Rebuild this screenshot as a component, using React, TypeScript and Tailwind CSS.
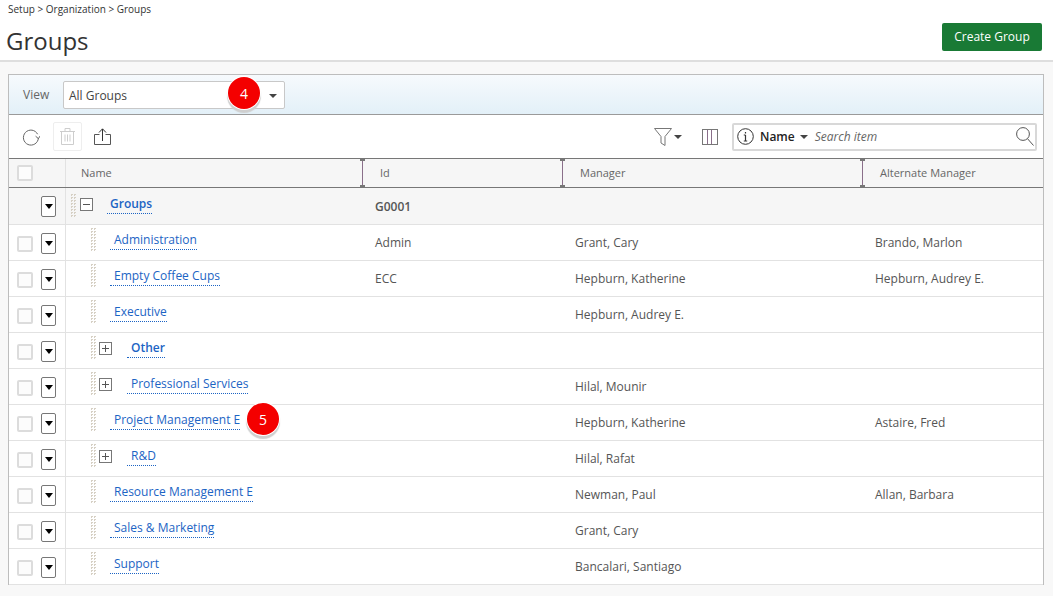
// Setup > Organization > Groups tree list.

type Row = { name: string; id?: string; manager?: string; alt?: string; expand?: boolean; bold?: boolean };

const rows: Row[] = [
  { name: 'Administration', id: 'Admin', manager: 'Grant, Cary', alt: 'Brando, Marlon' },
  { name: 'Empty Coffee Cups', id: 'ECC', manager: 'Hepburn, Katherine', alt: 'Hepburn, Audrey E.' },
  { name: 'Executive', manager: 'Hepburn, Audrey E.' },
  { name: 'Other', expand: true, bold: true },
  { name: 'Professional Services', expand: true, manager: 'Hilal, Mounir' },
  { name: 'Project Management E', manager: 'Hepburn, Katherine', alt: 'Astaire, Fred' },
  { name: 'R&D', expand: true, manager: 'Hilal, Rafat' },
  { name: 'Resource Management E', manager: 'Newman, Paul', alt: 'Allan, Barbara' },
  { name: 'Sales & Marketing', manager: 'Grant, Cary' },
  { name: 'Support', manager: 'Bancalari, Santiago' },
];

const gridCols = 'grid grid-cols-[57px_296px_200px_300px_1fr]';

function Caret({ className = '' }: { className?: string }) {
  return <span className={`inline-block w-0 h-0 border-x-[4px] border-x-transparent border-t-[4px] border-t-[#444] ${className}`} />;
}

function Checkbox() {
  return <span className="block w-[16px] h-[16px] rounded-[2px] border-2 border-[#dcdcdc] bg-[#fcfcfc]" />;
}

function RowMenu() {
  return (
    <span className="flex items-center justify-center w-[15px] h-[21px] rounded-[2px] border border-[#777] bg-white">
      <span className="w-0 h-0 border-x-[4px] border-x-transparent border-t-[5px] border-t-black" />
    </span>
  );
}

function DragHandle() {
  return <span className="block w-[6px] h-[23px] bg-[conic-gradient(#d6d0c4_25%,transparent_0)] bg-[length:3px_3px]" />;
}

function ToggleBox({ open }: { open?: boolean }) {
  return (
    <span className="relative block w-[13px] h-[13px] border border-[#777] bg-white">
      <span className="absolute left-[2px] right-[2px] top-[5px] h-px bg-[#555]" />
      {!open && <span className="absolute top-[2px] bottom-[2px] left-[5px] w-px bg-[#555]" />}
    </span>
  );
}

function Badge({ n, className }: { n: number; className: string }) {
  return (
    <span className={`absolute flex items-center justify-center w-[32px] h-[32px] rounded-full bg-[#f40000] text-white text-[14px] shadow-[0_0_0_1px_#ffffff,0_3px_1px_1px_#cfcfcf] ${className}`}>
      {n}
    </span>
  );
}

function HeaderCell({ label }: { label: string }) {
  return (
    <div className="relative flex items-center h-full pl-[18px] text-[#666] text-[11px]">
      <span className="absolute left-0 top-0 bottom-0 w-px bg-[#8a6f8a]" />
      <span className="absolute left-[-2px] top-0 w-[5px] h-[2px] bg-[#777]" />
      <span className="absolute left-[-2px] bottom-0 w-[5px] h-[2px] bg-[#777]" />
      {label}
    </div>
  );
}

function TreeRow({ row }: { row: Row }) {
  return (
    <div className={`${gridCols} h-[36px] border-b border-[#e2e2e2] bg-white text-[12px] text-[#555]`}>
      <div className="flex items-center gap-[8px] pl-[8px] h-full border-r border-[#e2e2e2] pt-[2px]">
        <Checkbox />
        <RowMenu />
      </div>
      <div className="flex items-start pl-[24px] pt-[3px]">
        <DragHandle />
        {row.expand && <span className="ml-[3px] mt-[6px]"><ToggleBox /></span>}
        <a className={`${row.expand ? 'ml-[15px]' : 'ml-[14px]'} mt-[3px] pl-[4px] pb-[1px] leading-[17px] text-[#1c64c4] border-b border-dotted border-[#1c64c4] ${row.bold ? 'font-semibold' : ''}`}>
          {row.name}
        </a>
      </div>
      <div className="flex items-center pl-[13px]">{row.id}</div>
      <div className="flex items-center pl-[13px]">{row.manager}</div>
      <div className="flex items-center pl-[13px]">{row.alt}</div>
    </div>
  );
}

export default function App() {
  return (
    <div className="relative w-[1053px] h-[596px] overflow-hidden bg-[#f8f8f8] font-['Open_Sans',sans-serif]">
      <div className="relative h-[62px] bg-white border-b-2 border-[#dedede]">
        <div className="pl-[8px] pt-[2px] text-[10px] leading-[14px] text-[#333]">Setup &gt; Organization &gt; Groups</div>
        <h1 className="pl-[6px] pt-[9px] text-[24px] leading-[32px] text-[#333]">Groups</h1>
        <button type="button" className="absolute right-[11px] top-[23px] w-[100px] h-[28px] rounded-[2px] bg-[#197a35] text-white text-[12px]">
          Create Group
        </button>
      </div>

      <div className="mx-[8px] mt-[12px] w-[1036px] border border-[#bdbdbd] border-b-0 bg-white">
        <div className="relative flex items-center h-[40px] border-b border-[#9a9a9a] bg-gradient-to-b from-[#f6fafd] to-[#e3f0f8]">
          <span className="ml-[14px] w-[40px] pt-[1px] text-[12px] text-[#666]">View</span>
          <div className="flex items-center justify-between w-[222px] h-[28px] pl-[5px] pr-[7px] pt-[2px] rounded-[2px] border border-[#c8c8c8] bg-white text-[12px] text-[#444]">
            All Groups
            <Caret />
          </div>
        </div>

        <div className="flex items-center h-[44px] border-b border-[#777] pl-[13px]">
          <svg width="18" height="18" viewBox="0 0 18 18" fill="none" stroke="#666" strokeWidth="1">
            <path d="M15.6 6.2A7.5 7.5 0 1 0 16.4 10" />
            <path d="M13.6 8.2l2.8 2.4 2-3" />
          </svg>
          <span className="flex items-center justify-center ml-[13px] w-[29px] h-[29px] rounded-[2px] border border-[#eeeeee]">
            <svg width="15" height="17" viewBox="0 0 15 17" fill="none" stroke="#cdcdcd" strokeWidth="1">
              <path d="M0 3.5h15M5 3.5V.5h5v3M1.5 3.5v13h12v-13M5 6.5v7M7.5 6.5v7M10 6.5v7" />
            </svg>
          </span>
          <svg width="17" height="17" viewBox="0 0 17 17" fill="none" stroke="#555" strokeWidth="1" className="ml-[12px]">
            <path d="M5.5 6.5H.5v10h16v-10h-5" />
            <path d="M8.5 13V1" stroke="#333" />
            <path d="M5 4.5L8.5 .8 12 4.5" stroke="#333" />
          </svg>
          <svg width="18" height="18" viewBox="0 0 18 18" fill="none" stroke="#777" strokeWidth="1" className="ml-[543px]">
            <path d="M.5 .5h17L11 8.5v9l-4-2.5V8.5z" />
          </svg>
          <Caret className="ml-[2px]" />
          <span className="grid grid-cols-3 ml-[20px] w-[16px] h-[16px] border border-[#777]">
            <span className="border-r border-[#8a6f8a]" />
            <span className="border-r border-[#8a6f8a]" />
            <span />
          </span>
          <div className="flex items-center ml-[14px] w-[305px] h-[28px] rounded-[2px] border-2 border-[#d8d8d8] bg-white">
            <svg width="17" height="17" viewBox="0 0 17 17" fill="none" stroke="#333" strokeWidth="1" className="ml-[3px]">
              <circle cx="8.5" cy="8.5" r="7.8" />
              <path d="M8.5 7v6M6.8 7h1.7M6.8 13h3.4M8.5 4v1.4" strokeWidth="1.2" />
            </svg>
            <span className="ml-[6px] text-[12px] font-semibold text-[#222]">Name</span>
            <Caret className="ml-[5px]" />
            <span className="ml-[7px] flex-1 text-[12px] italic text-[#666]">Search item</span>
            <svg width="18" height="19" viewBox="0 0 18 19" fill="none" stroke="#555" strokeWidth="1" className="mr-[1px]">
              <circle cx="7" cy="7" r="6.4" />
              <path d="M11.6 11.8L17.5 18.5" />
            </svg>
          </div>
        </div>

        <div className={`${gridCols} h-[29px] border-b border-[#777] bg-[#f6f6f6]`}>
          <div className="flex items-center pl-[8px] border-r border-[#e2e2e2]"><Checkbox /></div>
          <div className="flex items-center pl-[15px] text-[11px] text-[#666]">Name</div>
          <HeaderCell label="Id" />
          <HeaderCell label="Manager" />
          <HeaderCell label="Alternate Manager" />
        </div>

        <div className={`${gridCols} h-[37px] border-b border-[#e2e2e2] bg-[#f6f6f6] text-[12px] text-[#555]`}>
          <div className="flex items-center pl-[32px] border-r border-[#e2e2e2]"><RowMenu /></div>
          <div className="flex items-start pl-[4px] pt-[6px]">
            <DragHandle />
            <span className="ml-[4px] mt-[4px]"><ToggleBox open /></span>
            <a className="ml-[14px] pl-[3px] pb-[1px] mt-[1px] leading-[17px] font-semibold text-[#1c64c4] border-b border-dotted border-[#1c64c4]">Groups</a>
          </div>
          <div className="flex items-center pl-[13px] pt-[2px] font-semibold">G0001</div>
          <div />
          <div />
        </div>

        {rows.map((row) => (
          <TreeRow key={row.name} row={row} />
        ))}
      </div>

      <Badge n={4} className="left-[228px] top-[77px]" />
      <Badge n={5} className="left-[247px] top-[403px]" />
    </div>
  );
}
